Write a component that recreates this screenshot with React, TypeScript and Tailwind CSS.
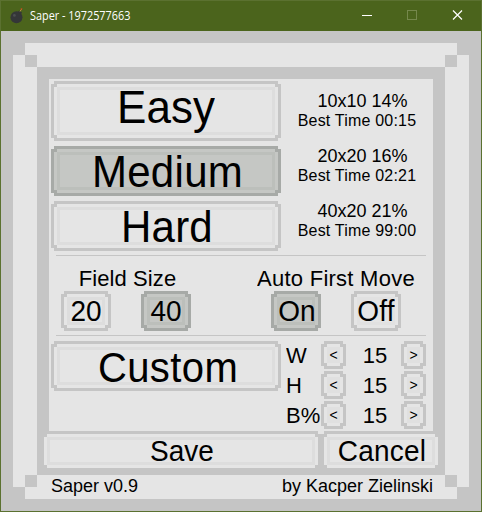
import type { ReactNode } from "react";

const NOTCH =
  "[clip-path:polygon(3px_0,calc(100%-3px)_0,calc(100%-3px)_3px,100%_3px,100%_calc(100%-3px),calc(100%-3px)_calc(100%-3px),calc(100%-3px)_100%,3px_100%,3px_calc(100%-3px),0_calc(100%-3px),0_3px,3px_3px)]";

function PixelButton({
  size,
  text,
  active = false,
  ring = "border-[#dddddd]",
  children,
}: {
  size: string;
  text: string;
  active?: boolean;
  ring?: string;
  children: ReactNode;
}) {
  return (
    <button
      className={`block shrink-0 p-[3px] ${NOTCH} ${size} ${active ? "bg-[#a7aaa7]" : "bg-[#c5c5c5]"}`}
    >
      <span className={`block h-full w-full p-[3px] ${NOTCH} ${active ? "bg-[#c5c7c4]" : "bg-[#e5e5e5]"}`}>
        <span
          className={`flex h-full w-full items-center justify-center border-[3px] ${active ? "border-[#bcbfbb]" : ring}`}
        >
          <span className={`block shrink-0 origin-[50%_85%] scale-y-[1.04] whitespace-nowrap leading-none ${text}`}>
            {children}
          </span>
        </span>
      </span>
    </button>
  );
}

function Score({ board, time }: { board: string; time: string }) {
  return (
    <div className="h-[55px] w-[152px] pt-[10px] text-center whitespace-nowrap">
      <div className="origin-[50%_80%] scale-y-[1.04] pl-[11px] text-[18px] leading-[20px]">{board}</div>
      <div className="origin-[50%_80%] scale-y-[1.04] text-[16px] leading-[19px] tracking-[0.2px]">{time}</div>
    </div>
  );
}

function Stepper({ label }: { label: string }) {
  return (
    <div className="flex h-[30px] items-start">
      <span className="w-[35px] origin-[50%_80%] scale-y-[1.04] pt-[3px] text-[22px] leading-[24px]">{label}</span>
      <PixelButton ring="border-[#e0e0e0]" size="h-[28px] w-[25px]" text="text-[14px]">&lt;</PixelButton>
      <span className="w-[55px] origin-[50%_80%] scale-y-[1.04] pt-[3px] pl-[3px] text-center text-[22px] leading-[24px]">
        15
      </span>
      <PixelButton ring="border-[#e0e0e0]" size="h-[28px] w-[25px]" text="text-[14px]">&gt;</PixelButton>
    </div>
  );
}

function TitleBar() {
  return (
    <header className="flex h-[30px] items-center text-white">
      <svg className="ml-[8px]" width="16" height="16" viewBox="0 0 16 16">
        <circle cx="7.5" cy="9.2" r="6" fill="#343638" />
        <circle cx="5.4" cy="7.4" r="1.4" fill="#4b4d50" />
        <path d="M9.5 3.2l3 2.2" stroke="#343638" strokeWidth="2" />
        <path d="M11 3.5l1.2-2" stroke="#b98a4a" strokeWidth="1" />
        <path d="M11.5.8l1.8-.6-.5 2z" fill="#f04a23" />
      </svg>
      <span className="ml-[5px] flex-1 origin-left scale-x-[0.905] whitespace-nowrap pb-px font-['Open_Sans',sans-serif] text-[12px] leading-[16px]">
        Saper - 1972577663
      </span>
      <svg width="120" height="30" viewBox="0 0 120 30" fill="none">
        <path d="M1 14.5h10" stroke="#fff" />
        <rect x="46.5" y="9.5" width="9" height="9" stroke="#75884c" />
        <path d="M92 9.5l9 9M101 9.5l-9 9" stroke="#fff" strokeWidth="1.2" />
      </svg>
    </header>
  );
}

export default function App() {
  return (
    <div className="h-[512px] w-[482px] overflow-hidden border border-[#5b7130] bg-[#4b641c] font-['Liberation_Sans',Arial,sans-serif] text-black">
      <TitleBar />
      <main className="h-[480px] w-[480px] bg-[#c5c5c5] p-[12px]">
        <div className="relative h-[456px] bg-[#e5e5e5] px-[24px] pt-[24px] [clip-path:polygon(12px_0,444px_0,444px_12px,456px_12px,456px_444px,444px_444px,444px_456px,12px_456px,12px_444px,0_444px,0_12px,12px_12px)]">
          <i className="absolute top-[12px] left-[12px] size-[12px] bg-[#c5c5c5]" />
          <i className="absolute top-[12px] right-[12px] size-[12px] bg-[#c5c5c5]" />
          <i className="absolute bottom-[12px] left-[12px] size-[12px] bg-[#c5c5c5]" />
          <i className="absolute right-[12px] bottom-[12px] size-[12px] bg-[#c5c5c5]" />

          <div className="h-[408px] bg-[#c5c5c5] pt-[12px]">
            <div className="mx-[12px] h-[384px] bg-[#e5e5e5] pt-[2px] pl-[2px]">
              <section className="flex h-[174px]">
                <div className="flex flex-col">
                  <PixelButton size="mb-[5px] h-[60px] w-[230px]" text="pb-[6px] text-[44px]">Easy</PixelButton>
                  <PixelButton active size="mb-[5px] h-[50px] w-[230px]" text="pt-[4px] pl-[3px] text-[42px] tracking-[0.3px]">
                    Medium
                  </PixelButton>
                  <PixelButton size="h-[50px] w-[230px]" text="pt-[4px] pl-[2px] text-[42px] tracking-[0.2px]">
                    Hard
                  </PixelButton>
                </div>
                <div>
                  <Score board="10x10 14%" time="Best Time 00:15" />
                  <Score board="20x20 16%" time="Best Time 02:21" />
                  <Score board="40x20 21%" time="Best Time 99:00" />
                </div>
              </section>
              <hr className="ml-[5px] w-[370px] border-[#c5c5c5]" />

              <section className="flex h-[79px] pt-[10px] pl-[10px] text-[22px] leading-[25px]">
                <div className="w-[133px]">
                  <div className="origin-[50%_80%] scale-y-[1.04] text-center tracking-[0.1px] whitespace-nowrap">Field Size</div>
                  <div className="flex justify-between pr-[3px]">
                    <PixelButton size="h-[40px] w-[50px]" text="pt-px text-[28px]">20</PixelButton>
                    <PixelButton active size="h-[40px] w-[50px]" text="pt-px text-[28px]">40</PixelButton>
                  </div>
                </div>
                <div className="ml-[61px] w-[162px]">
                  <div className="origin-[50%_80%] scale-y-[1.04] text-center tracking-[0.25px] whitespace-nowrap">
                    Auto First Move
                  </div>
                  <div className="flex gap-[30px] pl-[16px]">
                    <PixelButton active size="h-[40px] w-[50px]" text="pt-px pl-[2px] text-[28px]">On</PixelButton>
                    <PixelButton ring="border-[#e1e1e1]" size="h-[40px] w-[50px]" text="pt-px text-[28px] tracking-[0.3px]">
                      Off
                    </PixelButton>
                  </div>
                </div>
              </section>
              <hr className="ml-[5px] w-[370px] border-[#c5c5c5]" />

              <section className="flex pt-[5px]">
                <PixelButton size="h-[50px] w-[230px]" text="pt-[3px] pl-[4px] text-[40px] tracking-[0.4px]">
                  Custom
                </PixelButton>
                <div className="ml-[5px]">
                  <Stepper label="W" />
                  <Stepper label="H" />
                  <Stepper label="B%" />
                </div>
              </section>
            </div>

            <div className="relative mx-[4px] -mt-[32px] flex">
              <PixelButton size="h-[40px] w-[280px]" text="pt-px pl-[2px] text-[28px]">Save</PixelButton>
              <PixelButton size="h-[40px] w-[120px]" text="pt-px pl-[2px] text-[28px] tracking-[0.2px]">Cancel</PixelButton>
            </div>
          </div>

          <footer className="flex origin-[50%_80%] scale-y-[1.04] justify-between pr-[12px] pl-[14px] text-[18px] leading-[22px]">
            <span>Saper v0.9</span>
            <span>by Kacper Zielinski</span>
          </footer>
        </div>
      </main>
    </div>
  );
}
